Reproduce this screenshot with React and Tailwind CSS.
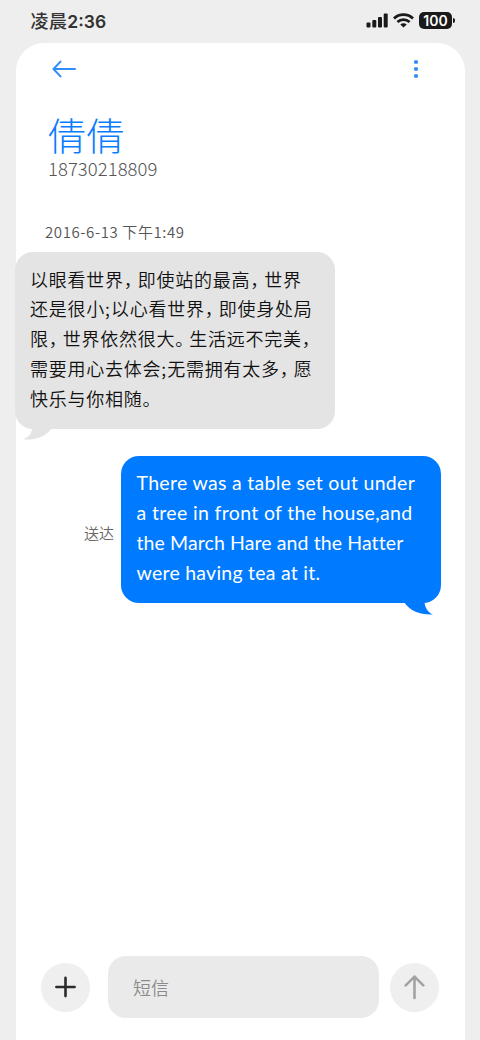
import React from 'react';

const incomingLines = [
  '以眼看世界，即使站的最高，世界',
  '还是很小;以心看世界，即使身处局',
  '限，世界依然很大。生活远不完美，',
  '需要用心去体会;无需拥有太多，愿',
  '快乐与你相随。',
];

const outgoingLines = [
  { text: 'There was a table set out under', className: 'tracking-[0.3px]' },
  { text: 'a tree in front of the house,and', className: 'tracking-[0.35px]' },
  { text: 'the March Hare and the Hatter', className: 'tracking-[0.1px]' },
  { text: 'were having tea at it.', className: 'tracking-[0.25px]' },
];

// Full-width punctuation is set tighter than the characters around it
const CjkLine = ({ text }) => (
  <div className="h-[29.8px] whitespace-nowrap">
    {text.split(/([，。;])/).map((part, i) => {
      if (part === ';') {
        return <span key={i} className="inline-block w-[6px] tracking-normal">{part}</span>;
      }
      if (part === '，' || part === '。') {
        return <span key={i} className="inline-block w-[14px] tracking-normal [font-feature-settings:'halt']">{part}</span>;
      }
      return <span key={i}>{part}</span>;
    })}
  </div>
);

const StatusBar = () => (
  <div className="flex h-[43px] items-center justify-between pb-[2px] pl-[30.5px] pr-[25px]">
    <span className="pt-[2px] text-[18px] font-medium tracking-[0.4px] text-[#333]">
      凌晨<span className="font-['Inter'] text-[17.5px] font-semibold tracking-normal">2:36</span>
    </span>
    <div className="flex items-center">
      {/* Signal */}
      <svg className="mr-[5px]" width="22" height="15" viewBox="0 0 22 15" fill="#1a1a1a">
        <rect x="0.5" y="9.5" width="4" height="5" rx="1" />
        <rect x="6.3" y="7" width="4" height="7.5" rx="1" />
        <rect x="12" y="4" width="4" height="10.5" rx="1" />
        <rect x="17.700" y="0.5" width="4" height="14" rx="1" />
      </svg>
      {/* Wifi */}
      <svg className="mr-[5px]" width="21" height="15" viewBox="0 0 21 15" fill="none" stroke="#1a1a1a" strokeWidth="2.7">
        <path d="M1 5.4C6.3.4 14.7.4 20 5.4" />
        <path d="M4.4 9C8 5.7 13 5.7 16.6 9" />
        <path d="M10.5 14.6L7.3 11.5C9.1 9.9 11.9 9.9 13.7 11.5Z" fill="#1a1a1a" stroke="none" />
      </svg>
      {/* Battery */}
      <div className="flex h-[17px] w-[33px] items-center justify-center rounded-[5px] bg-[#1a1a1a] font-['Inter'] text-[14px] font-semibold text-white">
        100
      </div>
      <span className="ml-px h-[5px] w-[2px] rounded-r-full bg-[#1a1a1a]" />
    </div>
  </div>
);

const Header = () => (
  <header className="flex items-center justify-between pl-[36px] pr-[44px] pt-[16px]">
    <button aria-label="返回">
      <svg width="25" height="20" viewBox="0 0 25 20" fill="none" stroke="#2f8cf8" strokeWidth="2" strokeLinecap="round" strokeLinejoin="round">
        <path d="M23 10H1.5M8.500 2.6L1.5 10L8.500 17.4" />
      </svg>
    </button>
    <button aria-label="更多">
      <svg width="9" height="20" viewBox="0 0 9 20" fill="#2f8cf8">
        <circle cx="4" cy="3" r="2.1" />
        <circle cx="4" cy="10" r="2.1" />
        <circle cx="4" cy="17" r="2.1" />
      </svg>
    </button>
  </header>
);

const InputBar = () => (
  <div className="mt-auto flex items-center pb-[22px] pl-[25px]">
    <button aria-label="添加" className="flex size-[49px] items-center justify-center rounded-full bg-[#efefef]">
      <svg width="22" height="22" viewBox="0 0 22 22" fill="none" stroke="#2b2b2b" strokeWidth="2.6" strokeLinecap="round">
        <path d="M10.500 1.9V20.1M1.4 11H19.6" />
      </svg>
    </button>
    <div className="ml-[18px] flex h-[62px] w-[271px] items-center rounded-[18px] bg-[#eaeaea] pl-[25px] text-[18px] font-[350] text-[#8a8a8a]">
      短信
    </div>
    <button aria-label="发送" className="ml-[11px] flex size-[49px] items-center justify-center rounded-full bg-[#efefef]">
      <svg width="22" height="26" viewBox="0 0 22 26" fill="none" stroke="#a3a3a3" strokeWidth="2.6" strokeLinecap="round" strokeLinejoin="round">
        <path d="M10.500 24V2.6M1.700 11.4L10.500 2.6L19.300 11.4" />
      </svg>
    </button>
  </div>
);

const App = () => {
  return (
    <div className="flex h-[1040px] w-[480px] flex-col overflow-hidden bg-[#eee] font-['Noto_Sans_CJK_SC',sans-serif]">
      <StatusBar />
      <main className="ml-[16px] mr-[15px] flex flex-1 flex-col rounded-t-[28px] bg-white">
        <Header />

        {/* Contact */}
        <div className="pl-[32px] pt-[32px]">
          <h1 className="h-[46px] text-[38px] font-light leading-[46px] tracking-[0.5px] text-[#0a7cff]">倩倩</h1>
          <p className="h-[22px] text-[18.5px] font-light leading-[22px] tracking-[0.05px] text-[#555]">18730218809</p>
        </div>
        <p className="ml-[29px] mt-[42px] h-[22px] text-[15px] font-[350] leading-[22px] tracking-[0.6px] text-[#555]">
          2016-6-13 下午1:49
        </p>

        {/* Incoming message */}
        <div className="relative -ml-px mt-[9px] h-[177px] w-[320px] rounded-[18px] bg-[#e4e4e4] pl-[15px] pt-[11.5px] text-[18px] font-[350] leading-[30px] tracking-[0.75px] text-[#111]">
          {incomingLines.map((line) => (
            <CjkLine key={line} text={line} />
          ))}
          <svg className="absolute left-[8px] top-[176px]" width="30" height="12" viewBox="0 0 30 12" fill="#e4e4e4">
            <path d="M9 0C8.6 6 5.500 9.500 0 11.300C12 12.600 22.500 9 29 0Z" />
          </svg>
        </div>

        {/* Outgoing message */}
        <div className="mt-[27px] flex items-center pl-[68px]">
          <span className="w-[37px] whitespace-nowrap pt-[6px] text-[15px] font-[350] leading-[22px] text-[#666]">送达</span>
          <div className="relative h-[147px] w-[320px] rounded-[18px] bg-[#007aff] pl-[15.5px] pt-[12px] font-['Lato'] text-[19.5px] leading-[30px] text-white">
            {outgoingLines.map((line) => (
              <div key={line.text} className={`whitespace-nowrap ${line.className}`}>{line.text}</div>
            ))}
            <svg className="absolute left-[283px] top-[146px]" width="30" height="13" viewBox="0 0 30 13" fill="#007aff">
              <path d="M0 0C6 9 16 13 29 12.500C24 10.500 21 6 20.500 0Z" />
            </svg>
          </div>
        </div>

        <InputBar />
      </main>
    </div>
  );
};

export default App;
